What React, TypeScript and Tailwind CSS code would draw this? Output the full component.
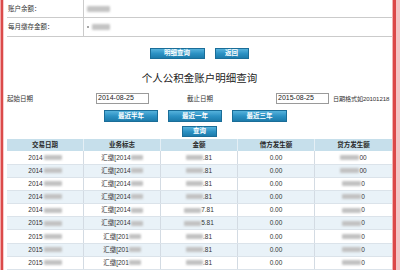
import React from "react";

function Blur({ w, h = 6, tone = "#b9b9b9" }: { w: number; h?: number; tone?: string }) {
  return (
    <span
      className="inline-block blur-[1px] rounded-[1px]"
      style={{ width: w, height: h, backgroundColor: tone }}
    />
  );
}

function Btn({ children, w }: { children: React.ReactNode; w: number }) {
  return (
    <div
      className="h-full flex items-center justify-center bg-linear-to-b from-[#55b2dc] via-[#2c92c4] to-[#1c7bab] border border-[#1a6d98] text-white font-bold text-[6.5px] leading-none"
      style={{ width: w }}
    >
      {children}
    </div>
  );
}

const rows = [
  { y: "2014", b: "汇缴[2014", a: ".81", c: "00" },
  { y: "2014", b: "汇缴[2014", a: ".81", c: "00" },
  { y: "2014", b: "汇缴[2014", a: ".81", c: "0" },
  { y: "2014", b: "汇缴[2014", a: ".81", c: "0" },
  { y: "2014", b: "汇缴[2014", a: "7.81", c: "0" },
  { y: "2015", b: "汇缴[2014", a: "5.81", c: "0" },
  { y: "2015", b: "汇缴[201", a: ".81", c: "0" },
  { y: "2015", b: "汇缴[201", a: ".81", c: "0" },
  { y: "2015", b: "汇缴[201", a: ".81", c: "0" },
];

export default function App() {
  return (
    <div className="w-[400px] h-[270px] overflow-hidden bg-white flex font-['Liberation_Sans','Noto_Sans_CJK_SC',sans-serif] text-[#333]">
      <div className="flex shrink-0">
        <div className="w-px bg-[#f2a9a9]" />
        <div className="w-[2px] bg-[#db4a4a]" />
        <div className="w-px bg-[#f6cccc]" />
      </div>
      <div className="ml-[3px] w-[385px] shrink-0 flex flex-col">
        {/* top info table */}
        <div className="flex h-[20px] border-b border-[#cbcbcb]">
          <div className="w-[77px] border-r border-[#cbcbcb] flex items-center pl-px text-[6.5px]">账户余额：</div>
          <div className="flex items-center pl-[3px]">
            <Blur w={23} h={6} tone="#c4c4c4" />
          </div>
        </div>
        <div className="flex h-[21px] border-b border-[#cbcbcb]">
          <div className="w-[77px] border-r border-[#cbcbcb] flex items-center pl-px text-[6.5px]">每月缴存金额：</div>
          <div className="flex items-center pl-[3px] gap-[3px]">
            <span className="w-[2px] h-[2px] bg-[#888] rounded-full" />
            <Blur w={18} h={6} tone="#c4c4c4" />
          </div>
        </div>

        {/* action buttons */}
        <div className="mt-[11px] h-[12px] flex justify-center gap-[10px] pr-px">
          <Btn w={55}>明细查询</Btn>
          <Btn w={34}>返回</Btn>
        </div>

        {/* title */}
        <div className="mt-[12px] h-[14px] leading-[14px] text-center text-[10.5px] text-[#222]">个人公积金账户明细查询</div>

        {/* date row */}
        <div className="mt-[8px] h-[11px] grid grid-cols-[89px_91px_89px_1fr] items-center text-[6.5px]">
          <div>起始日期</div>
          <div className="h-[11px] w-[53px] border border-[#9a9a9a] flex items-center pl-px text-[7px] text-[#222]">2014-08-25</div>
          <div>截止日期</div>
          <div className="flex items-center gap-[4px]">
            <div className="h-[11px] w-[53px] border border-[#9a9a9a] flex items-center pl-px text-[7px] text-[#222]">2015-08-25</div>
            <div className="whitespace-nowrap text-[6.1px] tracking-[-0.1px]">日期格式如20101218</div>
          </div>
        </div>

        {/* period buttons */}
        <div className="mt-[6px] h-[13px] flex gap-[10px] ml-[97px]">
          <Btn w={54}>最近半年</Btn>
          <Btn w={54}>最近一年</Btn>
          <Btn w={55}>最近三年</Btn>
        </div>
        <div className="mt-[4px] h-[12px] flex justify-center">
          <Btn w={35}>查询</Btn>
        </div>

        {/* detail table */}
        <div className="mt-[2px] grid grid-cols-5 h-[14px] bg-[#c6dfeb] text-[6.5px] font-bold text-[#2a2a2a]">
          {["交易日期", "业务标志", "金额", "借方发生额", "贷方发生额"].map((t, i) => (
            <div key={t} className={`flex items-center justify-center ${i < 4 ? "border-r border-[#e4eff5]" : ""}`}>
              {t}
            </div>
          ))}
        </div>
        {rows.map((r, i) => (
          <div
            key={i}
            className={`grid grid-cols-5 h-[13.2px] shrink-0 border-b border-[#dbe3ea] text-[6.5px] text-[#333] ${i % 2 === 1 ? "bg-[#e9f2f8]" : "bg-white"}`}
          >
            <div className="flex items-center justify-center gap-[1px] border-r border-[#d3dbe3]">
              <span>{r.y}</span>
              <Blur w={18} h={5} tone="#c2c2c2" />
            </div>
            <div className="flex items-center justify-center border-r border-[#d3dbe3]">
              <span>{r.b}</span>
              <Blur w={12} h={5} tone="#c2c2c2" />
            </div>
            <div className="flex items-center justify-center border-r border-[#d3dbe3]">
              <Blur w={17} h={5} tone="#c2c2c2" />
              <span>{r.a}</span>
            </div>
            <div className="flex items-center justify-center border-r border-[#d3dbe3]">0.00</div>
            <div className="flex items-center justify-center">
              <Blur w={19} h={5} tone="#c2c2c2" />
              <span>{r.c}</span>
            </div>
          </div>
        ))}
      </div>
      <div className="flex shrink-0">
        <div className="w-px bg-[#f0b3b3]" />
        <div className="w-[3px] bg-[#db4848]" />
        <div className="w-[4px] bg-[#f4c4c4]" />
      </div>
    </div>
  );
}
